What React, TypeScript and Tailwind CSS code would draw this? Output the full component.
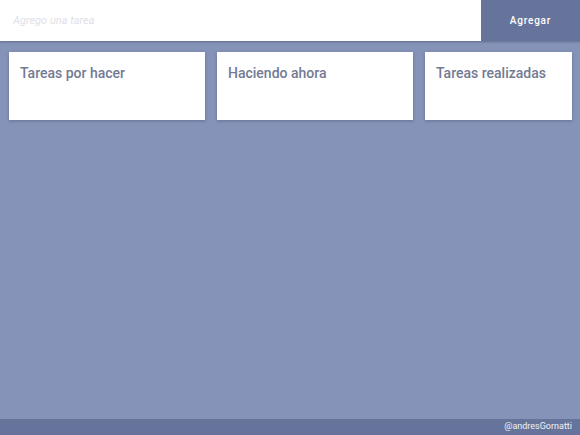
export default function App() {
    const columns = [
        { name: "Tareas por hacer", width: "w-[196px]" },
        { name: "Haciendo ahora", width: "w-[196px]" },
        { name: "Tareas realizadas", width: "w-[147px]" },
    ];

    return (
        <div className="h-[435px] w-[580px] flex flex-col bg-[#8693b9] overflow-hidden" style={{ fontFamily: "Roboto, 'Liberation Sans', sans-serif" }}>
            <header className="flex h-[41px] shrink-0 shadow-[0_1px_2px_rgba(60,70,100,0.5)]">
                <input
                    type="text"
                    placeholder="Agrego una tarea"
                    className="flex-1 h-full bg-white px-[13px] text-[11px] italic text-gray-600 placeholder:text-[#e0e0e6] outline-none"
                />
                <button className="w-[99px] h-full bg-[#66739a] text-white text-[10px] font-medium tracking-[0.08em]">
                    Agregar
                </button>
            </header>

            <main className="flex-1 flex gap-[12px] pl-[9px] pt-[11px]">
                {columns.map((col) => (
                    <section
                        key={col.name}
                        className={`${col.width} h-[68px] bg-white shadow-[0_1px_3px_rgba(50,60,90,0.4)] px-[11px] pt-[12px]`}
                    >
                        <h2 className="text-[14px] font-medium text-[#737a94] leading-[18px]">{col.name}</h2>
                    </section>
                ))}
            </main>

            <footer className="h-[16px] shrink-0 bg-[#66739a] flex items-center justify-end pr-[8px]">
                <span className="text-[9px] text-white/90">@andresGornatti</span>
            </footer>
        </div>
    );
}
